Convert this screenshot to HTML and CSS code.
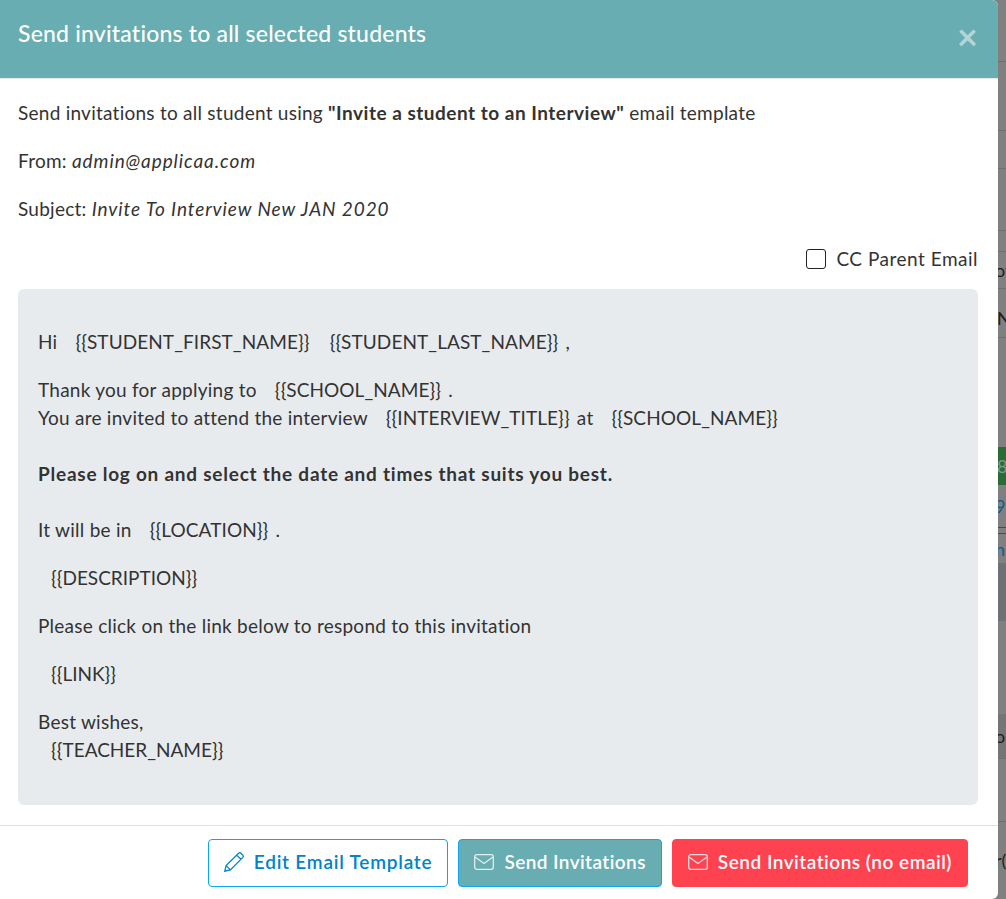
FILE: index.html
```html
<!DOCTYPE html>
<html lang="en">
<head>
<meta charset="utf-8">
<title>Send invitations</title>
<link rel="stylesheet" href="styles.css">
</head>
<body>
<div class="screen">
  <div class="modal">
    <header class="modal-header">
      <h1 class="modal-title">Send invitations to all selected students</h1>
      <span class="close">×</span>
    </header>
    <main class="modal-body">
      <p class="line">Send invitations to all student using <b class="quote">"Invite a student to an Interview"</b> email template</p>
      <p class="line">From: <i>admin@applicaa.com</i></p>
      <p class="line">Subject: <i>Invite To Interview New JAN 2020</i></p>
      <label class="cc"><span class="box"></span>CC Parent Email</label>
      <div class="email">
        <p class="para">Hi <span class="tag">{{STUDENT_FIRST_NAME}}</span> <span class="tag">{{STUDENT_LAST_NAME}}</span> ,</p>
        <p class="para">Thank you for applying to <span class="tag">{{SCHOOL_NAME}}</span> .<br>You are invited to attend the interview <span class="tag">{{INTERVIEW_TITLE}}</span> at <span class="tag">{{SCHOOL_NAME}}</span></p>
        <p class="para gap"><b>Please log on and select the date and times that suits you best.</b></p>
        <p class="para">It will be in <span class="tag">{{LOCATION}}</span> .</p>
        <p class="para indent tagtext">{{DESCRIPTION}}</p>
        <p class="para">Please click on the link below to respond to this invitation</p>
        <p class="para indent tagtext">{{LINK}}</p>
        <p class="para last">Best wishes,<br><span class="indent tagtext">{{TEACHER_NAME}}</span></p>
      </div>
    </main>
    <footer class="modal-footer">
      <button class="btn btn-edit"><svg class="ico pencil" viewBox="0 0 20 20"><path d="M0.8 19.2l1.3-5.6L14.6 1.2a1.6 1.6 0 0 1 2.3 0l1.9 1.9a1.6 1.6 0 0 1 0 2.3L6.4 17.9zM2.1 13.6l4.3 4.3M12.7 3.1l4.2 4.2"/></svg>Edit Email Template</button>
      <button class="btn btn-send"><svg class="ico" viewBox="0 0 20 16"><rect x="0.7" y="0.7" width="18.6" height="14.6" rx="2"/><path d="M1 3l9 6.5L19 3"/></svg>Send Invitations</button>
      <button class="btn btn-noemail"><svg class="ico" viewBox="0 0 20 16"><rect x="0.7" y="0.7" width="18.6" height="14.6" rx="2"/><path d="M1 3l9 6.5L19 3"/></svg>Send Invitations (no email)</button>
    </footer>
  </div>
  <aside class="page-behind">
    <div class="row r62"></div>
    <div class="row r69"></div>
    <div class="row r38"></div>
    <div class="row r62"></div>
    <div class="row r21"></div>
    <div class="row r37"><span class="frag">ot</span></div>
    <div class="row r49"><span class="frag big">N</span></div>
    <div class="row r109"></div>
    <div class="row green"><span class="frag eight">8</span></div>
    <div class="row blue r18"><span class="frag link">9</span></div>
    <div class="row blue r25"></div>
    <div class="row r31"><span class="frag link">n</span></div>
    <div class="row shade r58"></div>
    <div class="row r93"></div>
    <div class="row shade2 r45"><span class="frag">o</span></div>
    <div class="row r63"></div>
    <div class="row last-row"><span class="frag">r(</span></div>
  </aside>
</div>
</body>
</html>
```
FILE: styles.css
```css
* { box-sizing: border-box; }
html, body { margin: 0; padding: 0; }
body { background: #808080; font-family: "Lato", sans-serif; color: #333; font-size: 19px; }
.screen { width: 1006px; height: 899px; overflow: hidden; display: flex; }
.modal { width: 998px; flex: none; height: 899px; background: #fff; border-radius: 0 6px 6px 0; display: flex; flex-direction: column; overflow: hidden; }
.modal-header { height: 79px; flex: none; background: #68adb2; border-bottom: 1px solid #e5e9ec; padding: 0 20px 0 18px; display: flex; justify-content: space-between; }
.modal-title { margin: 19px 0 0; font-size: 23px; line-height: 28px; letter-spacing: .2px; font-weight: 500; color: #fff; }
.close { margin-top: 18px; font-size: 36px; line-height: 36px; font-weight: 700; color: #fff; opacity: .5; }
.modal-body { flex: 1; padding: 20px 20px 20px 18px; display: flex; flex-direction: column; letter-spacing: .25px; }
.modal-body b { letter-spacing: .76px; }
.modal-body .quote { letter-spacing: .5px; }
.modal-body i { letter-spacing: .9px; }
.line { margin: 0 0 20px; line-height: 28px; }
.cc { align-self: flex-end; display: flex; align-items: center; height: 26px; margin-top: 2px; letter-spacing: .5px; }
.box { width: 20px; height: 20px; margin-top: 2px; border: 1px solid #222; border-radius: 3px; margin-right: 10px; }
.email { margin-top: 18px; height: 516px; background: #e8ebee; border-radius: 6px; padding: 39px 20px 0 20px; }
.para { margin: 0 0 20px; line-height: 28px; }
.gap { margin-bottom: 28px; margin-top: 28px; }
.tag { margin: 0 2px 0 13px; letter-spacing: .08px; }
.tagtext { letter-spacing: 0; }
.indent { padding-left: 13px; }
.modal-footer { height: 74px; flex: none; border-top: 1px solid #e0e0e0; display: flex; justify-content: flex-end; gap: 10px; padding: 13px 30px 0 0; }
.btn { height: 48px; border-radius: 4px; border: 1px solid #0ea5f0; font: 600 19px "Lato", sans-serif; letter-spacing: .42px; display: flex; align-items: center; padding: 0 15px 3px; }
.ico { width: 20px; height: 16px; margin-right: 10px; fill: none; stroke: currentColor; stroke-width: 1.3; opacity: .8; }
.pencil { height: 20px; opacity: 1; }
.btn-edit { background: #fff; color: #0083c9; letter-spacing: .78px; }
.btn-send { background: #68adb2; color: #fff; }
.btn-noemail { background: #ff424f; border-color: #ff424f; color: #fff; letter-spacing: .5px; }
.page-behind { flex: 1; display: flex; flex-direction: column; overflow: hidden; font-size: 18px; color: #1d1d1d; }
.row { border-bottom: 1px solid #6f6f6f; display: flex; align-items: center; flex: none; overflow: hidden; }
.frag { margin-left: -3px; white-space: nowrap; line-height: 1; }
.big { margin-left: -1px; margin-top: 9px; }
.r62 { height: 62px; } .r69 { height: 69px; } .r38 { height: 38px; } .r21 { height: 21px; }
.r37 { height: 37px; } .r49 { height: 49px; } .r109 { height: 109px; border-bottom: 0; }
.green { height: 38px; background: #2b6b36; border-bottom: 0; }
.eight { color: #7f9a84; margin-left: -1px; }
.blue { border-bottom: 1px solid #0a5f90; }
.link { color: #0a5f90; }
.r18 { height: 43px; } .r25 { height: 6px; } .r31 { height: 29px; border-bottom: 0; }
.shade { background: #6d7175; border-bottom: 0; } .r58 { height: 58px; }
.r93 { height: 93px; border-bottom: 0; }
.shade2 { background: #757575; } .r45 { height: 45px; }
.r63 { height: 63px; }
.last-row { border-bottom: 0; height: 76px; }
```
